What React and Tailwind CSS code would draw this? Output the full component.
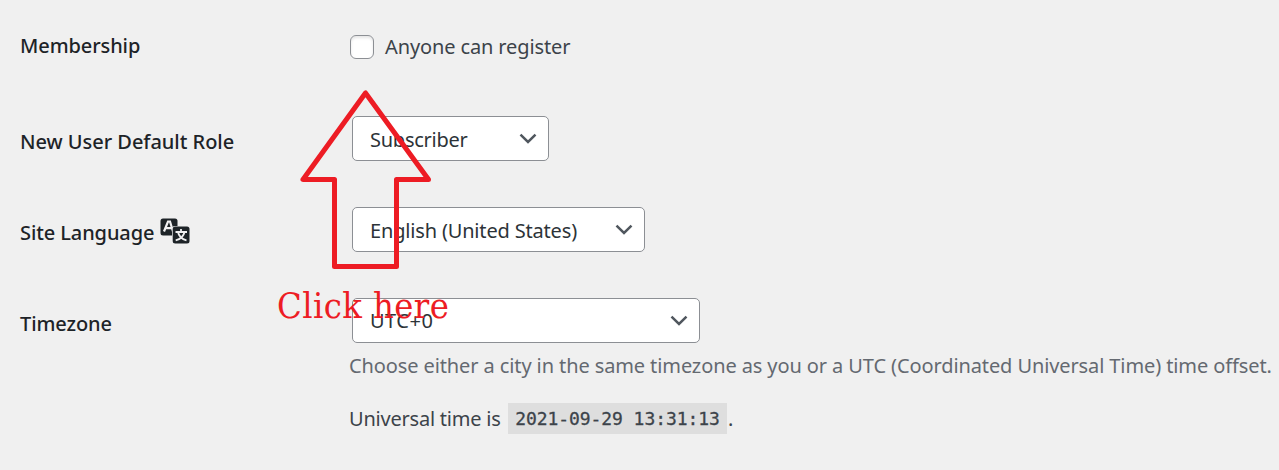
function Chevron() {
  return (
    <svg className="h-5 w-5 shrink-0" viewBox="0 0 20 20" fill="none" stroke="#50575e" strokeWidth="2.5">
      <path d="M2.5 5.7 10 13l7.5-7.3" />
    </svg>
  );
}

function Select({ children, className }) {
  return (
    <button type="button" className={`flex h-[45px] items-center justify-between rounded-[5px] border border-[#8c8f94] bg-white pl-[17px] pr-[10px] text-left text-[#2c3338] ${className}`}>
      {children}
      <Chevron />
    </button>
  );
}

function Label({ children, className }) {
  return <div className={`flex w-[332px] shrink-0 items-center pl-[19px] font-medium text-[#1d2327] ${className}`}>{children}</div>;
}

function TranslateIcon() {
  return (
    <svg className="mb-1 ml-[6px] h-[26px] w-[30px]" viewBox="0 0 30 26">
      <rect x="0.5" y="0.5" width="17" height="17" rx="2.5" fill="#1d2327" />
      <path d="m4 13.5 4-10h2l3 10M5.5 10.2h6" fill="none" stroke="#f0f0f1" strokeWidth="2.2" />
      <rect x="12" y="8" width="18" height="18" rx="3" fill="#f0f0f1" />
      <rect x="12.7" y="8.5" width="16.8" height="17" rx="2.5" fill="#1d2327" />
      <path d="M15.5 14h11.5M21 11v3M18 14c.8 4 4 7.2 8.5 8.3M24.5 14c-.8 4-4 7.2-8.8 8.3" fill="none" stroke="#f0f0f1" strokeWidth="1.8" />
    </svg>
  );
}

export default function App() {
  return (
    <main className="relative h-[470px] w-[1279px] overflow-hidden whitespace-nowrap bg-[#f0f0f0] font-['Noto_Sans',sans-serif] text-[20px] leading-[30px] text-[#3c434a]">
      <div className="flex h-[93px] items-center">
        <Label className="pb-[1px]"><span className="ml-px tracking-[-0.1px]">Membership</span></Label>
        <div className="flex items-center gap-[11px] pl-[18px] pt-px">
          <span className="h-6 w-6 rounded-[6px] border border-[#8c8f94] bg-white shadow-[inset_0_2px_3px_rgba(0,0,0,0.1)]" />
          <span className="tracking-[-0.12px]">Anyone can register</span>
        </div>
      </div>
      <div className="flex h-[91px] items-center">
        <Label className="pt-1.5"><span className="ml-px tracking-[-0.03px]">New User Default Role</span></Label>
        <div className="pl-5"><Select className="w-[197px]"><span className="pt-0.5 tracking-[-0.25px]">Subscriber</span></Select></div>
      </div>
      <div className="flex h-[91px] items-center">
        <Label className="pt-1.5"><span className="ml-px tracking-[-0.1px]">Site Language</span><TranslateIcon /></Label>
        <div className="pl-5"><Select className="w-[293px]"><span className="pt-0.5 tracking-[-0.17px]">English (United States)</span></Select></div>
      </div>
      <div className="flex h-[91px] items-center">
        <Label className="pt-1.5"><span className="ml-px tracking-[-0.1px]">Timezone</span></Label>
        <div className="pl-5"><Select className="w-[348px]"><span className="tracking-[0.5px]">UTC+0</span></Select></div>
      </div>
      <div className="-mt-[15px] pl-[349px]">
        <p className="text-[#646970]"><span className="tracking-[-0.105px]">Choose either a city in the same timezone as you or a UTC (Coordinated Universal Time) time offset.</span></p>
        <p className="mt-[22px] flex items-center">
          <span className="w-[151px] tracking-[-0.22px]">Universal time is</span>
          <code className="ml-2 flex h-[31px] w-[219px] items-center justify-center bg-[#dedede] pt-px font-['DejaVu_Sans_Mono',monospace] text-[18px] tracking-[-0.08px] [-webkit-text-stroke:0.3px_#3c434a]">2021-09-29 13:31:13</code>
          <span className="ml-px">.</span>
        </p>
      </div>
      <svg className="absolute left-[298px] top-[88px] h-[184px] w-[136px]" viewBox="298 88 136 184" fill="none" stroke="#ed1c24" strokeWidth="5" strokeLinejoin="round">
        <path d="M365.5 93 303 179.5h31.5v87h62v-87h32z" />
      </svg>
      <span className="absolute left-[277px] top-[281px] font-['DejaVu_Serif_Condensed','DejaVu_Serif',serif] text-[36px] leading-[50px] tracking-[0.4px] text-[#ed1c24]">Click here</span>
    </main>
  );
}
